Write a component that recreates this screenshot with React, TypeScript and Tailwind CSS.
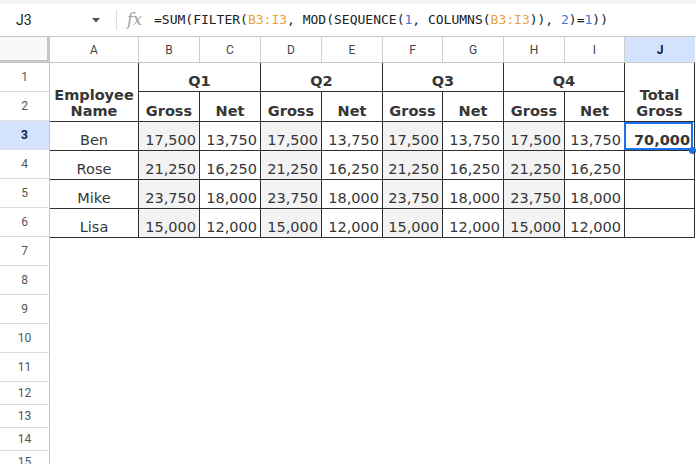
const cols = ['A', 'B', 'C', 'D', 'E', 'F', 'G', 'H', 'I', 'J']

const rows = [
  { name: 'Ben', vals: ['17,500', '13,750', '17,500', '13,750', '17,500', '13,750', '17,500', '13,750'], total: '70,000' },
  { name: 'Rose', vals: ['21,250', '16,250', '21,250', '16,250', '21,250', '16,250', '21,250', '16,250'], total: '' },
  { name: 'Mike', vals: ['23,750', '18,000', '23,750', '18,000', '23,750', '18,000', '23,750', '18,000'], total: '' },
  { name: 'Lisa', vals: ['15,000', '12,000', '15,000', '12,000', '15,000', '12,000', '15,000', '12,000'], total: '' },
]

const rowNums = Array.from({ length: 15 }, (_, i) => i + 1)

const grid = 'grid grid-cols-[89px_61px_61px_61px_61px_60px_61px_61px_60px_70px]'
const cell = 'flex items-end border-r border-b border-[#2e2e2e] pb-[2px] leading-[16px]'

function FormulaBar() {
  const orange = 'text-[#eaa043]'
  const blue = 'text-[#3f78cf]'
  return (
    <div className="h-[37px] border-b border-[#c7c7c7] bg-white">
      <div className="h-[4px] bg-[#f4f4f4]" />
      <div className="flex h-[32px] items-center">
        <span className="ml-[16px] w-[74px] text-[14px] text-[#202124] font-['Roboto',sans-serif]">J3</span>
        <svg width="8" height="5" viewBox="0 0 8 5" className="ml-[2px]">
          <path d="M0 0h8L4 4.5z" fill="#555" />
        </svg>
        <div className="ml-[16px] h-[20px] w-px bg-[#dadce0]" />
        <span className="ml-[10px] w-[27px] font-['DejaVu_Serif',serif] text-[16px] italic text-[#a0a0a0]">fx</span>
        <span className="font-['DejaVu_Sans_Mono',monospace] text-[13px] text-[#202124]">
          =SUM(FILTER(<span className={orange}>B3:I3</span>, MOD(SEQUENCE(<span className={blue}>1</span>, COLUMNS(
          <span className={orange}>B3:I3</span>)), <span className={blue}>2</span>)=<span className={blue}>1</span>))
        </span>
      </div>
    </div>
  )
}

function ColumnHeader() {
  return (
    <div className="flex h-[26px] font-['Roboto',sans-serif] text-[12px] text-[#444]">
      <div className="w-[50px] border-r-[3px] border-b-[3px] border-[#c4c7c5] bg-[#f8f9fa]" />
      <div className={`${grid} flex-1 border-b border-[#c4c7c5]`}>
        {cols.map((c) =>
          c === 'J' ? (
            <div key={c} className="flex items-center justify-center bg-[#d3e3fd] font-bold text-[#0b1f4a]">
              {c}
            </div>
          ) : (
            <div key={c} className="flex items-center justify-center border-r border-[#d0d0d0] bg-white">
              {c}
            </div>
          )
        )}
      </div>
    </div>
  )
}

function RowHeaders() {
  return (
    <div className="w-[50px] shrink-0 border-r border-[#c4c7c5] font-['Roboto',sans-serif] text-[12px] text-[#555]">
      {rowNums.map((n) => (
        <div
          key={n}
          className={`flex items-center justify-center border-b border-[#dcdcdc] ${n <= 11 ? 'h-[29px]' : 'h-[23px]'} ${
            n === 3 ? 'bg-[#d3e3fd] font-bold text-[#0b1f4a]' : 'bg-white'
          }`}
        >
          {n}
        </div>
      ))}
    </div>
  )
}

function Table() {
  return (
    <div
      className={`${grid} grid-rows-[29px_30px_29px_29px_29px_29px] font-['DejaVu_Sans',Verdana,sans-serif] text-[14.5px] text-[#363636]`}
    >
      <div className={`${cell} row-span-2 justify-center text-center font-bold`}>
        Employee
        <br />
        Name
      </div>
      {['Q1', 'Q2', 'Q3', 'Q4'].map((q) => (
        <div key={q} className={`${cell} col-span-2 justify-center font-bold`}>
          {q}
        </div>
      ))}
      <div className={`${cell} row-span-2 justify-center text-center font-bold`}>
        Total
        <br />
        Gross
      </div>
      {[0, 1, 2, 3].flatMap((i) => [
        <div key={`g${i}`} className={`${cell} justify-center font-bold`}>
          Gross
        </div>,
        <div key={`n${i}`} className={`${cell} justify-center font-bold`}>
          Net
        </div>,
      ])}
      {rows.map((r, ri) => [
        <div key={`name${ri}`} className={`${cell} justify-center`}>
          {r.name}
        </div>,
        ...r.vals.map((v, vi) => (
          <div
            key={`v${ri}-${vi}`}
            className={`${cell} justify-end pr-[3px] ${vi % 2 === 0 ? 'bg-[#f3f3f3]' : 'bg-white'}`}
          >
            {v}
          </div>
        )),
        <div key={`t${ri}`} className={`${cell} relative justify-end pr-[4px] font-bold`}>
          {r.total}
          {ri === 0 && (
            <>
              <div className="absolute top-0 right-[1px] bottom-0 -left-px border-2 border-[#1a73e8]" />
              <div className="absolute right-[-2px] bottom-[-4px] h-[7px] w-[7px] rounded-full bg-[#1a73e8]" />
            </>
          )}
        </div>,
      ])}
    </div>
  )
}

export default function App() {
  return (
    <div className="h-[464px] w-[696px] overflow-hidden bg-white">
      <FormulaBar />
      <ColumnHeader />
      <div className="flex">
        <RowHeaders />
        <div className="flex-1">
          <Table />
        </div>
      </div>
    </div>
  )
}
